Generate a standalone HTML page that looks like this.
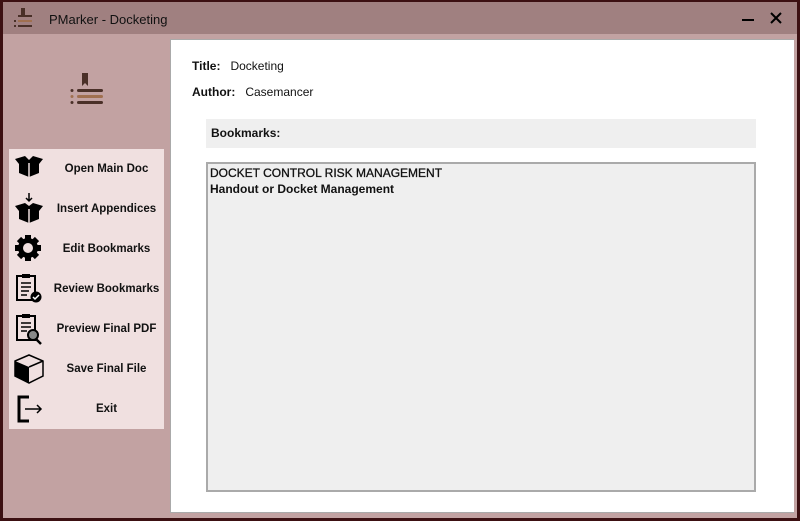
<!DOCTYPE html>
<html><head><style>
*{margin:0;padding:0;box-sizing:border-box}
body{width:800px;height:521px;overflow:hidden;background:#3c1012;font-family:"Liberation Sans",Arial,sans-serif;position:relative}
.win{position:absolute;left:3px;top:2px;width:794px;height:516px;background:#c2a2a2}
.tb{position:absolute;left:0;top:0;width:794px;height:32px;background:#a08080}
.tt{position:absolute;left:46px;top:10px;font-size:13px;color:#111}
.panel{position:absolute;left:167px;top:37px;width:624px;height:474px;background:#fff;border:1px solid #aaa;border-right:none}
.menu{position:absolute;left:6px;top:147px;width:155px;height:280px;background:#f0e0e0}
.item{position:absolute;left:0;width:155px;height:40px;font-size:11.5px;font-weight:bold;color:#111}
.item span{position:absolute;left:40px;right:0;top:14px;text-align:center}
.item svg{position:absolute;left:4px;top:4px}
.lbl{position:absolute;font-size:12px;color:#111}
</style></head><body>
<div class="win">
<div class="tb">
<svg style="position:absolute;left:8px;top:5px" width="26" height="22" viewBox="0 0 26 22"><rect x="10" y="1" width="4" height="7" fill="#4a3028"/><rect x="7" y="8" width="14" height="2" fill="#4a3028"/><rect x="7" y="13" width="14" height="2" fill="#a07050"/><rect x="7" y="18" width="14" height="2" fill="#4a3028"/><rect x="3" y="13" width="2" height="2" fill="#4a3028"/><rect x="3" y="18" width="2" height="2" fill="#4a3028"/></svg>
<div class="tt">PMarker - Docketing</div>
<div style="position:absolute;left:739px;top:17px;width:12px;height:2px;background:#000"></div>
<svg style="position:absolute;left:767px;top:10px" width="12" height="12"><path d="M1 1l10 10M11 1L1 11" stroke="#000" stroke-width="2"/></svg>
</div>
<svg style="position:absolute;left:66px;top:69px" width="40" height="38" viewBox="0 0 40 38"><path d="M13 2h6v13l-3-3-3 3z" fill="#4a3028"/><rect x="8" y="18" width="26" height="3" rx="1.5" fill="#4a3028"/><rect x="8" y="24" width="26" height="3" rx="1.5" fill="#a07050"/><rect x="8" y="30" width="26" height="3" rx="1.5" fill="#4a3028"/><circle cx="3" cy="19.5" r="1.5" fill="#4a3028"/><circle cx="3" cy="25.5" r="1.5" fill="#a07050"/><circle cx="3" cy="31.5" r="1.5" fill="#4a3028"/></svg>
<div class="menu">
<div class="item" style="top:0"><svg width="32" height="30"><path d="M2 6l10-3 4 4 4-4 10 3-4 5v9l-10 4-10-4v-9z" fill="#000"/><path d="M16 10v14" stroke="#f0e0e0" stroke-width="1.5"/></svg><span>Open Main Doc</span></div>
<div class="item" style="top:40px"><svg width="32" height="32"><path d="M16 0v7M13 5l3 3 3-3" stroke="#000" stroke-width="1.5" fill="none"/><path d="M2 13l10-3 4 3 4-3 10 3-4 5v8l-10 4-10-4v-8z" fill="#000"/><path d="M16 16v14" stroke="#f0e0e0" stroke-width="1.5"/></svg><span>Insert Appendices</span></div>
<div class="item" style="top:80px"><svg width="32" height="32"><circle cx="15" cy="15" r="10" fill="#000"/><g stroke="#000" stroke-width="6"><path d="M15 2v26M2 15h26M6 6l18 18M24 6L6 24"/></g><circle cx="15" cy="15" r="5" fill="#f0e0e0"/></svg><span>Edit Bookmarks</span></div>
<div class="item" style="top:120px"><svg width="32" height="32"><rect x="4" y="3" width="18" height="24" fill="none" stroke="#000" stroke-width="2"/><rect x="9" y="1" width="8" height="4" fill="#000"/><path d="M8 10h10M8 14h10M8 18h8M8 22h6" stroke="#000" stroke-width="1.5"/><circle cx="23" cy="24" r="5.5" fill="#000"/><path d="M20 24l2 2 4-4" stroke="#fff" stroke-width="1.5" fill="none"/></svg><span>Review Bookmarks</span></div>
<div class="item" style="top:160px"><svg width="32" height="32"><rect x="4" y="3" width="18" height="24" fill="none" stroke="#000" stroke-width="2"/><rect x="9" y="1" width="8" height="4" fill="#000"/><path d="M8 10h10M8 14h10M8 18h6" stroke="#000" stroke-width="1.5"/><circle cx="20" cy="22" r="5" fill="#888" stroke="#000" stroke-width="2"/><path d="M23 26l5 5" stroke="#000" stroke-width="2.5"/></svg><span>Preview Final PDF</span></div>
<div class="item" style="top:200px"><svg width="32" height="32"><path d="M16 2l14 6v15l-14 7-14-7V8z" fill="none" stroke="#000" stroke-width="1.5"/><path d="M2 8l14 6v16L2 23z" fill="#000"/><path d="M16 14l14-6" stroke="#000" stroke-width="1.5"/></svg><span>Save Final File</span></div>
<div class="item" style="top:240px"><svg width="32" height="32"><path d="M16 4H6v24h10" fill="none" stroke="#000" stroke-width="3"/><path d="M12 16h16M24 12l4 4-4 4" fill="none" stroke="#000" stroke-width="1.5"/></svg><span>Exit</span></div>
</div>
<div class="panel">
<div class="lbl" style="left:21px;top:19px"><b>Title:</b>&nbsp;&nbsp; Docketing</div>
<div class="lbl" style="left:21px;top:45px"><b>Author:</b>&nbsp;&nbsp; Casemancer</div>
<div style="position:absolute;left:35px;top:79px;width:550px;height:29px;background:#efefef"><div class="lbl" style="left:5px;top:7px;font-weight:bold">Bookmarks:</div></div>
<div style="position:absolute;left:35px;top:122px;width:550px;height:330px;background:#efefef;border:2px solid #aaa">
<div class="lbl" style="left:2px;top:1px;line-height:16px"><span style="-webkit-text-stroke:0.3px #111">DOCKET CONTROL RISK MANAGEMENT</span><br><b>Handout or Docket Management</b></div>
</div>
</div>
</div>
</body></html>
